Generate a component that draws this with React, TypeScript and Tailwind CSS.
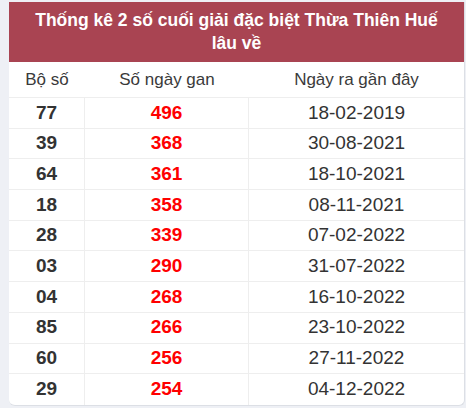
import React from 'react';

const rows: [string, string, string][] = [
  ['77', '496', '18-02-2019'],
  ['39', '368', '30-08-2021'],
  ['64', '361', '18-10-2021'],
  ['18', '358', '08-11-2021'],
  ['28', '339', '07-02-2022'],
  ['03', '290', '31-07-2022'],
  ['04', '268', '16-10-2022'],
  ['85', '266', '23-10-2022'],
  ['60', '256', '27-11-2022'],
  ['29', '254', '04-12-2022'],
];

export default function App() {
  return (
    <div
      className="w-[466px] h-[408px] overflow-hidden bg-[#eef0f5] pl-[9px] pt-[2px] pr-[1px]"
      style={{ fontFamily: '"Liberation Sans", Arial, sans-serif' }}
    >
      <div className="bg-white rounded-b-md border-r border-b border-[#dcdfe5] overflow-hidden">
        <div className="bg-[#a94452] text-white font-bold text-[17.5px] leading-[23px] text-center py-[7px] px-2">
          Thống kê 2 số cuối giải đặc biệt Thừa Thiên Huế
          <br />
          lâu về
        </div>

        <div className="grid grid-cols-[76px_164px_1fr] h-[36px] items-center text-[17px] text-[#3a3a3a] text-center border-b border-[#eeeeee]">
          <div>Bộ số</div>
          <div>Số ngày gan</div>
          <div>Ngày ra gần đây</div>
        </div>

        {rows.map(([num, days, date]) => (
          <div
            key={num}
            className="grid grid-cols-[76px_164px_1fr] h-[30.7px] text-[19px] text-center border-b border-[#eeeeee] last:border-b-0"
          >
            <div className="flex items-center justify-center font-bold text-[#333] border-r border-[#eeeeee]">
              {num}
            </div>
            <div className="flex items-center justify-center font-bold text-[#ff0000] border-r border-[#eeeeee]">
              {days}
            </div>
            <div className="flex items-center justify-center text-[#333]">{date}</div>
          </div>
        ))}
      </div>
    </div>
  );
}
